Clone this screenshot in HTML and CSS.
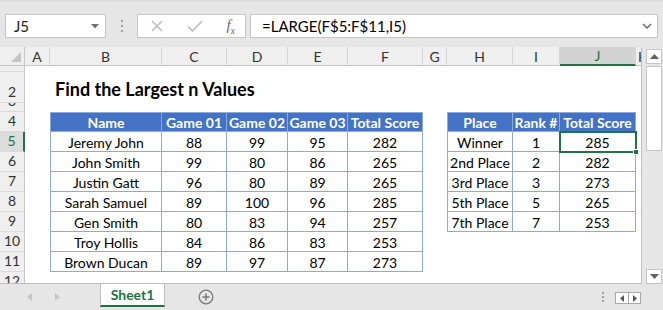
FILE: index.html
```html
<!DOCTYPE html>
<html lang="en">
<head>
    <meta charset="UTF-8">
    <title>Find the Largest n Values</title>
    <link rel="stylesheet" href="styles.css">
</head>
<body>

    <section id="formula-bar">
        <div class="name-box">
            <span>J5</span>
            <svg class="caret" width="8" height="5" viewBox="0 0 8 5"><path d="M0 0h8L4 4.5z" fill="#707070"/></svg>
        </div>
        <div class="grip">
            <i></i><i></i><i></i>
        </div>
        <div class="fn-box">
            <svg width="12" height="12" viewBox="0 0 12 12"><path d="M1 1l10 10M11 1L1 11" stroke="#bcbcbc" stroke-width="1.5"/></svg>
            <svg width="16" height="12" viewBox="0 0 16 12"><path d="M1 6.5l4.5 4.5L15 1" stroke="#bcbcbc" stroke-width="1.6" fill="none"/></svg>
            <span class="fx">f<sub>x</sub></span>
        </div>
        <div class="formula">
            <span>=LARGE(F$5:F$11,I5)</span>
            <svg width="10" height="6" viewBox="0 0 10 6"><path d="M1 1l4 4 4-4" stroke="#707070" stroke-width="1.6" fill="none"/></svg>
        </div>
    </section>

    <section id="workbook">
        <div class="sheet">
            <div class="col-head corner"><svg width="10" height="10" viewBox="0 0 10 10"><path d="M10 0v10H0z" fill="#c4c4c4"/></svg></div>
            <div class="col-head">A</div>
            <div class="col-head">B</div>
            <div class="col-head">C</div>
            <div class="col-head">D</div>
            <div class="col-head">E</div>
            <div class="col-head">F</div>
            <div class="col-head">G</div>
            <div class="col-head">H</div>
            <div class="col-head">I</div>
            <div class="col-head active">J</div>
            <div class="col-head cut">K</div>

            <div class="row-head">1</div>
            <div class="row-head">2</div>
            <div class="row-head">3</div>
            <div class="row-head">4</div>
            <div class="row-head active">5</div>
            <div class="row-head">6</div>
            <div class="row-head">7</div>
            <div class="row-head">8</div>
            <div class="row-head">9</div>
            <div class="row-head">10</div>
            <div class="row-head">11</div>
            <div class="row-head">12</div>

            <h1 class="title">Find the Largest n Values</h1>

            <div class="data scores">
                <div class="th">Name</div>
                <div class="th">Game 01</div>
                <div class="th">Game 02</div>
                <div class="th">Game 03</div>
                <div class="th">Total Score</div>

                <div>Jeremy John</div><div>88</div><div>99</div><div>95</div><div>282</div>
                <div>John Smith</div><div>99</div><div>80</div><div>86</div><div>265</div>
                <div>Justin Gatt</div><div>96</div><div>80</div><div>89</div><div>265</div>
                <div>Sarah Samuel</div><div>89</div><div>100</div><div>96</div><div>285</div>
                <div>Gen Smith</div><div>80</div><div>83</div><div>94</div><div>257</div>
                <div>Troy Hollis</div><div>84</div><div>86</div><div>83</div><div>253</div>
                <div>Brown Ducan</div><div>89</div><div>97</div><div>87</div><div>273</div>
            </div>

            <div class="data ranks">
                <div class="th">Place</div>
                <div class="th">Rank #</div>
                <div class="th">Total Score</div>

                <div>Winner</div><div>1</div><div class="selected">285<span class="handle"></span></div>
                <div>2nd Place</div><div>2</div><div>282</div>
                <div>3rd Place</div><div>3</div><div>273</div>
                <div>5th Place</div><div>5</div><div>265</div>
                <div>7th Place</div><div>7</div><div>253</div>
            </div>
        </div>

        <div class="v-scroll">
            <div class="scroll-btn"><svg width="9" height="5" viewBox="0 0 9 5"><path d="M0 5h9L4.5 0z" fill="#606060"/></svg></div>
            <div class="thumb"></div>
            <div class="track"></div>
            <div class="scroll-btn"><svg width="9" height="5" viewBox="0 0 9 5"><path d="M0 0h9L4.5 5z" fill="#606060"/></svg></div>
        </div>
    </section>

    <section id="tabs">
        <div class="tab-nav">
            <svg width="5" height="8" viewBox="0 0 5 8"><path d="M5 0v8L0 4z" fill="#c6c6c6"/></svg>
            <svg width="5" height="8" viewBox="0 0 5 8"><path d="M0 0v8l5-4z" fill="#c6c6c6"/></svg>
        </div>
        <div class="tab">Sheet1</div>
        <div class="add-sheet">
            <svg width="16" height="16" viewBox="0 0 16 16"><circle cx="8" cy="8" r="6.8" stroke="#7a7a7a" stroke-width="1.3" fill="none"/><path d="M8 4.5v7M4.5 8h7" stroke="#7a7a7a" stroke-width="1.5"/></svg>
        </div>
        <div class="tab-spacer"></div>
        <div class="grip small">
            <i></i><i></i><i></i>
        </div>
        <div class="h-scroll">
            <span><svg width="4" height="7" viewBox="0 0 4 7"><path d="M4 0v7L0 3.5z" fill="#555"/></svg></span>
            <span><svg width="4" height="7" viewBox="0 0 4 7"><path d="M0 0v7l4-3.5z" fill="#555"/></svg></span>
        </div>
    </section>

</body>
</html>
```

FILE: styles.css
```css
* {
    margin: 0;
    padding: 0;
    box-sizing: border-box;
}

body {
    width: 663px;
    height: 310px;
    overflow: hidden;
    background-color: #e6e6e6;
    font-family: 'Lato', 'Liberation Sans', sans-serif;
    color: #000;
}

/* formula bar */

#formula-bar {
    height: 47px;
    display: flex;
    padding: 12px 5px 0 5px;
    border-top: 2px solid #dcdcdc;
}

.name-box,
.fn-box,
.formula {
    height: 24px;
    background-color: #fff;
    border: 1px solid #c6c6c6;
    display: flex;
    align-items: center;
}

.name-box {
    width: 101px;
    padding: 0 6px 0 8px;
    justify-content: space-between;
    font-size: 15px;
    color: #222;
}

.grip {
    width: 31px;
    display: flex;
    flex-direction: column;
    align-items: center;
    gap: 3px;
    padding-top: 6px;
}

.grip i {
    width: 2px;
    height: 2px;
    background-color: #a0a0a0;
}

.fn-box {
    width: 109px;
    padding: 0 10px 0 13px;
    justify-content: space-between;
}

.fx {
    font-family: 'Liberation Serif', serif;
    font-style: italic;
    font-size: 15px;
    color: #6a6a6a;
}

.fx sub {
    font-size: 10px;
}

.formula {
    width: 408px;
    margin-left: 4px;
    padding: 0 5px 0 11px;
    justify-content: space-between;
    font-size: 15px;
}

/* sheet */

#workbook {
    display: flex;
    height: 237px;
}

.sheet {
    width: 642px;
    height: 237px;
    overflow: hidden;
    background-color: #fff;
    display: grid;
    grid-template-columns: 25px 25px 112px 65px 61px 60px 75px 24px 66px 47px 76px 6px;
    grid-template-rows: 19px 6px 31px 9px repeat(9, 20px);
    border-right: 1px solid #c0c0c0;
    border-bottom: 1px solid #bdbdbd;
}

.col-head {
    grid-row: 1;
    background-color: #efefef;
    border-right: 1px solid #d4d4d4;
    border-bottom: 1px solid #c8c8c8;
    display: flex;
    align-items: center;
    justify-content: center;
    font-size: 14px;
    color: #333;
    overflow: hidden;
}

.col-head.corner {
    align-items: flex-end;
    justify-content: flex-end;
    padding: 0 3px 3px 0;
    border-right-color: #c8c8c8;
}

.col-head.active {
    background-color: #d3d3d3;
    border-bottom: 2px solid #217346;
    color: #217346;
}

.col-head.cut {
    justify-content: flex-start;
    padding-left: 2px;
    border-right: none;
}

.row-head {
    grid-column: 1;
    background-color: #efefef;
    border-right: 1px solid #c8c8c8;
    border-bottom: 1px solid #dadada;
    display: flex;
    align-items: flex-end;
    justify-content: center;
    padding-bottom: 3px;
    font-size: 14px;
    line-height: 14px;
    color: #333;
    overflow: hidden;
}

.row-head.active {
    background-color: #dcdcdc;
    border-right: 2px solid #217346;
    color: #217346;
}

.title {
    grid-row: 3;
    grid-column: 3 / 8;
    display: flex;
    align-items: flex-end;
    padding: 0 0 4px 5px;
    font-size: 18px;
    font-weight: bold;
    line-height: 20px;
    white-space: nowrap;
}

.data {
    display: grid;
    grid-auto-rows: 20px;
    border-left: 1px solid #8ea9db;
    border-top: 1px solid #8ea9db;
    font-size: 14px;
}

.data > div {
    display: flex;
    align-items: center;
    justify-content: center;
    padding-top: 1px;
    border-right: 1px solid #8ea9db;
    border-bottom: 1px solid #8ea9db;
    white-space: nowrap;
}

.data > .th {
    height: 19px;
    background-color: #4472c4;
    color: #fff;
    font-weight: bold;
}

.scores {
    grid-row: 5 / 13;
    grid-column: 3 / 8;
    grid-template-columns: 111px 65px 61px 60px 75px;
    grid-template-rows: 19px;
}

.ranks {
    grid-row: 5 / 11;
    grid-column: 9 / 12;
    grid-template-columns: 65px 47px 76px;
    grid-template-rows: 19px;
    align-self: start;
}

.data > .selected {
    position: relative;
}

.selected::after {
    content: '';
    position: absolute;
    left: -1px;
    top: -1px;
    right: -2px;
    bottom: -2px;
    border: 2px solid #217346;
}

.handle {
    position: absolute;
    right: -4px;
    bottom: -4px;
    width: 6px;
    height: 6px;
    background-color: #217346;
    border: 1px solid #fff;
    z-index: 1;
}

/* vertical scrollbar */

.v-scroll {
    width: 21px;
    display: flex;
    flex-direction: column;
    padding: 2px 1px 0 4px;
}

.scroll-btn {
    height: 15px;
    background-color: #fff;
    border: 1px solid #c6c6c6;
    display: flex;
    align-items: center;
    justify-content: center;
}

.thumb {
    height: 85px;
    margin-top: 2px;
    background-color: #fff;
    border: 1px solid #c6c6c6;
}

.track {
    flex: 1;
}

/* sheet tabs */

#tabs {
    height: 26px;
    display: flex;
    align-items: stretch;
}

.tab-nav {
    width: 100px;
    display: flex;
    align-items: center;
    gap: 23px;
    padding-left: 27px;
}

.tab {
    width: 65px;
    background-color: #fff;
    border-left: 1px solid #bdbdbd;
    border-right: 1px solid #bdbdbd;
    border-bottom: 2px solid #217346;
    margin-bottom: 3px;
    display: flex;
    align-items: center;
    justify-content: center;
    font-size: 14px;
    font-weight: bold;
    color: #217346;
}

.add-sheet {
    width: 52px;
    display: flex;
    align-items: center;
    justify-content: center;
    padding-left: 30px;
}

.tab-spacer {
    flex: 1;
}

.grip.small {
    width: 12px;
    padding-top: 8px;
    gap: 2px;
}

.h-scroll {
    display: flex;
    height: 12px;
    margin: 8px 22px 0 6px;
    border: 1px solid #a8a8a8;
    background-color: #fff;
}

.h-scroll span {
    width: 12px;
    display: flex;
    align-items: center;
    justify-content: center;
}

.h-scroll span + span {
    border-left: 1px solid #a8a8a8;
}
```
